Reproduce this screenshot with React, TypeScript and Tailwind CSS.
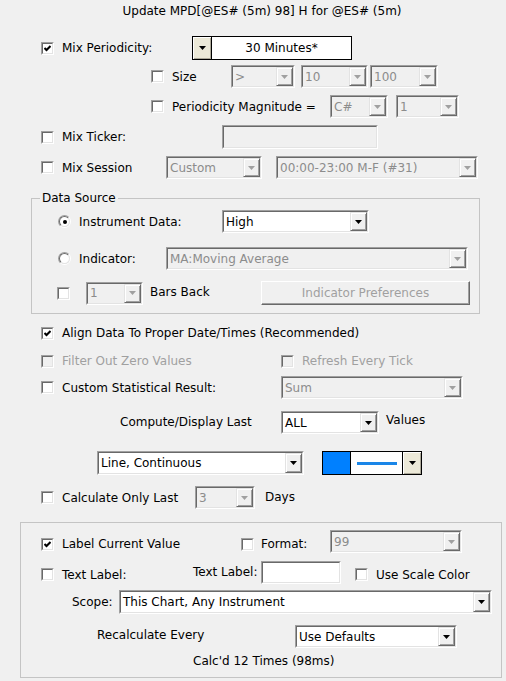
import React from 'react'

const Tri = ({ dis }: { dis?: boolean }) => (
  <svg width="7" height="4" viewBox="0 0 7 4">
    <path d="M0 0h7L3.5 4z" fill={dis ? '#a0a0a0' : '#000'} />
  </svg>
)

function Check({ on, dis }: { on?: boolean; dis?: boolean }) {
  return (
    <div className="w-[13px] h-[13px] shrink-0 border border-t-[#a0a0a0] border-l-[#a0a0a0] border-r-white border-b-white">
      <div
        className={`w-full h-full flex items-center justify-center border border-t-[#696969] border-l-[#696969] border-r-[#e3e3e3] border-b-[#e3e3e3] ${
          dis ? 'bg-[#f0f0f0]' : 'bg-white'
        }`}
      >
        {on && (
          <svg width="7" height="7" viewBox="0 0 7 7">
            <path d="M0.5 3 L2.5 5 L6.5 1" stroke="#000" strokeWidth="2" fill="none" />
          </svg>
        )}
      </div>
    </div>
  )
}

function Radio({ on }: { on?: boolean }) {
  return (
    <div className="w-[13px] h-[13px] shrink-0 rounded-full border border-t-[#a0a0a0] border-l-[#a0a0a0] border-r-white border-b-white">
      <div className="w-full h-full rounded-full flex items-center justify-center bg-white border border-t-[#696969] border-l-[#696969] border-r-[#e3e3e3] border-b-[#e3e3e3]">
        {on && <div className="w-[4px] h-[4px] rounded-full bg-black" />}
      </div>
    </div>
  )
}

function ArrowBtn({ dis }: { dis?: boolean }) {
  return (
    <div className="w-[17px] h-full shrink-0 flex items-center justify-center bg-[#f0f0f0] border border-t-[#e3e3e3] border-l-[#e3e3e3] border-r-[#696969] border-b-[#696969] shadow-[inset_1px_1px_0_#fff,inset_-1px_-1px_0_#a0a0a0]">
      <Tri dis={dis} />
    </div>
  )
}

function Combo({ cls, text, dis }: { cls: string; text: string; dis?: boolean }) {
  return (
    <div className={`${cls} shrink-0 border border-t-[#a0a0a0] border-l-[#a0a0a0] border-r-white border-b-white`}>
      <div
        className={`flex h-full border border-t-[#696969] border-l-[#696969] border-r-[#e3e3e3] border-b-[#e3e3e3] ${
          dis ? 'bg-[#f0f0f0]' : 'bg-white'
        }`}
      >
        <div className={`flex-1 min-w-0 pl-[2px] flex items-center whitespace-nowrap overflow-hidden ${dis ? 'text-[#8c8c8c]' : 'text-black'}`}>
          {text}
        </div>
        <ArrowBtn dis={dis} />
      </div>
    </div>
  )
}

function Field({ cls, dis }: { cls: string; dis?: boolean }) {
  return (
    <div className={`${cls} shrink-0 border border-t-[#a0a0a0] border-l-[#a0a0a0] border-r-white border-b-white`}>
      <div className={`h-full border border-t-[#696969] border-l-[#696969] border-r-[#e3e3e3] border-b-[#e3e3e3] ${dis ? 'bg-[#f0f0f0]' : 'bg-white'}`} />
    </div>
  )
}

const grey = 'text-[#a0a0a0]'

export default function App() {
  return (
    <div className="w-[506px] h-[681px] bg-[#f0f0f0] text-black text-[12px] leading-[14px] font-['Tahoma','DejaVu_Sans',sans-serif] overflow-hidden">
      {/* title */}
      <div className="h-[21px] flex items-center justify-center pl-[18px]">Update MPD[@ES# (5m) 98] H for @ES# (5m)</div>

      {/* Mix Periodicity */}
      <div className="flex items-center h-[24px] mt-[15px] pl-[41px]">
        <div className="flex items-center gap-[8px] w-[151px]">
          <Check on />
          <span>Mix Periodicity:</span>
        </div>
        <div className="w-[160px] h-[24px] flex border border-black bg-white">
          <div className="w-[19px] h-full flex items-center justify-center bg-[#ece9d8] border-r border-black shadow-[inset_1px_1px_0_#fff,inset_-1px_-1px_0_#aca899]">
            <Tri />
          </div>
          <div className="flex-1 flex items-center justify-center">30 Minutes*</div>
        </div>
      </div>

      <div className="flex items-center h-[23px] mt-[5px] pl-[151px]">
        <div className="flex items-center gap-[8px] w-[80px]">
          <Check />
          <span>Size</span>
        </div>
        <Combo cls="w-[64px] h-[23px]" text=">" dis />
        <Combo cls="w-[67px] h-[23px] ml-[6px]" text="10" dis />
        <Combo cls="w-[68px] h-[23px] ml-[2px]" text="100" dis />
      </div>

      <div className="flex items-center h-[23px] mt-[7px] pl-[151px]">
        <div className="flex items-center gap-[8px] w-[179px]">
          <Check />
          <span>Periodicity Magnitude =</span>
        </div>
        <Combo cls="w-[58px] h-[23px]" text="C#" dis />
        <Combo cls="w-[63px] h-[23px] ml-[8px]" text="1" dis />
      </div>

      <div className="flex items-center h-[24px] mt-[7px] pl-[41px]">
        <div className="flex items-center gap-[8px] w-[181px]">
          <Check />
          <span>Mix Ticker:</span>
        </div>
        <Field cls="w-[156px] h-[24px]" dis />
      </div>

      <div className="flex items-center h-[23px] mt-[7px] pl-[41px]">
        <div className="flex items-center gap-[8px] w-[125px]">
          <Check />
          <span>Mix Session</span>
        </div>
        <Combo cls="w-[96px] h-[23px]" text="Custom" dis />
        <Combo cls="w-[202px] h-[23px] ml-[14px]" text="00:00-23:00 M-F (#31)" dis />
      </div>

      {/* Data Source group */}
      <div className="ml-[31px] w-[449px] mt-[19px] border border-[#c4c4c4] pb-[8px]">
        <div className="-mt-[8px] ml-[8px] px-[2px] w-fit bg-[#f0f0f0]">Data Source</div>
        <div className="flex items-center h-[23px] mt-[5px] pl-[26px]">
          <div className="flex items-center gap-[8px] w-[164px]">
            <Radio on />
            <span>Instrument Data:</span>
          </div>
          <Combo cls="w-[147px] h-[23px]" text="High" />
        </div>
        <div className="flex items-center h-[23px] mt-[14px] pl-[26px]">
          <div className="flex items-center gap-[8px] w-[108px]">
            <Radio />
            <span>Indicator:</span>
          </div>
          <Combo cls="w-[302px] h-[23px]" text="MA:Moving Average" dis />
        </div>
        <div className="flex items-center h-[24px] mt-[11px] pl-[25px]">
          <Check />
          <Combo cls="w-[57px] h-[23px] ml-[16px]" text="1" dis />
          <div className="w-[118px] pl-[7px] -mt-[2px]">Bars Back</div>
          <div className={`w-[209px] h-[24px] flex items-center justify-center bg-[#f0f0f0] border border-t-white border-l-white border-r-[#696969] border-b-[#696969] shadow-[inset_-1px_-1px_0_#a0a0a0] ${grey}`}>
            Indicator Preferences
          </div>
        </div>
      </div>

      <div className="flex items-center h-[16px] mt-[11px] pl-[41px] gap-[8px]">
        <Check on />
        <span>Align Data To Proper Date/Times (Recommended)</span>
      </div>

      <div className="flex items-center h-[16px] mt-[12px] pl-[41px]">
        <div className={`flex items-center gap-[8px] w-[240px] ${grey}`}>
          <Check dis />
          <span>Filter Out Zero Values</span>
        </div>
        <div className={`flex items-center gap-[8px] ${grey}`}>
          <Check dis />
          <span>Refresh Every Tick</span>
        </div>
      </div>

      <div className="flex items-center h-[23px] mt-[7px] pl-[41px]">
        <div className="flex items-center gap-[8px] w-[240px]">
          <Check />
          <span>Custom Statistical Result:</span>
        </div>
        <Combo cls="w-[182px] h-[23px]" text="Sum" dis />
      </div>

      <div className="flex items-center h-[23px] mt-[12px] pl-[120px]">
        <div className="w-[161px] -mt-[1px]">Compute/Display Last</div>
        <Combo cls="w-[98px] h-[23px]" text="ALL" />
        <span className="ml-[7px] -mt-[5px]">Values</span>
      </div>

      <div className="flex items-center h-[24px] mt-[17px] pl-[97px]">
        <Combo cls="w-[207px] h-[24px]" text="Line, Continuous" />
        <div className="ml-[18px] w-[100px] h-[24px] flex border border-black bg-white">
          <div className="w-[28px] h-full bg-[#0080ff] border-r border-black" />
          <div className="flex-1 flex items-center justify-center">
            <div className="w-[40px] h-[3px] bg-[#1a86e8]" />
          </div>
          <div className="w-[19px] h-full flex items-center justify-center bg-[#ece9d8] border-l border-black shadow-[inset_1px_1px_0_#fff,inset_-1px_-1px_0_#aca899]">
            <Tri />
          </div>
        </div>
      </div>

      <div className="flex items-center h-[23px] mt-[11px] pl-[41px]">
        <div className="flex items-center gap-[8px] w-[154px]">
          <Check />
          <span>Calculate Only Last</span>
        </div>
        <Combo cls="w-[60px] h-[23px]" text="3" dis />
        <span className="ml-[10px] -mt-[2px]">Days</span>
      </div>

      {/* Label group */}
      <div className="ml-[20px] w-[482px] mt-[13px] border border-[#c4c4c4] pb-[9px]">
        <div className="flex items-center h-[23px] mt-[7px] pl-[20px]">
          <div className="flex items-center gap-[8px] w-[200px] mt-[5px]">
            <Check on />
            <span>Label Current Value</span>
          </div>
          <div className="flex items-center gap-[7px] w-[89px] mt-[5px]">
            <Check />
            <span>Format:</span>
          </div>
          <Combo cls="w-[132px] h-[23px]" text="99" dis />
        </div>
        <div className="flex items-center h-[23px] mt-[8px] pl-[20px]">
          <div className="flex items-center gap-[8px] w-[152px] mt-[4px]">
            <Check />
            <span>Text Label:</span>
          </div>
          <div className="w-[68px] -mt-[2px]">Text Label:</div>
          <Field cls="w-[80px] h-[23px]" />
          <div className="flex items-center gap-[8px] ml-[14px] mt-[4px]">
            <Check />
            <span>Use Scale Color</span>
          </div>
        </div>
        <div className="flex items-center h-[24px] mt-[6px] pl-[51px]">
          <div className="w-[47px]">Scope:</div>
          <Combo cls="w-[373px] h-[24px]" text="This Chart, Any Instrument" />
        </div>
        <div className="flex items-center h-[23px] mt-[11px] pl-[76px]">
          <div className="w-[198px] -mt-[4px]">Recalculate Every</div>
          <Combo cls="w-[162px] h-[23px]" text="Use Defaults" />
        </div>
        <div className="h-[14px] mt-[6px] pl-[172px]">Calc'd 12 Times (98ms)</div>
      </div>
    </div>
  )
}
